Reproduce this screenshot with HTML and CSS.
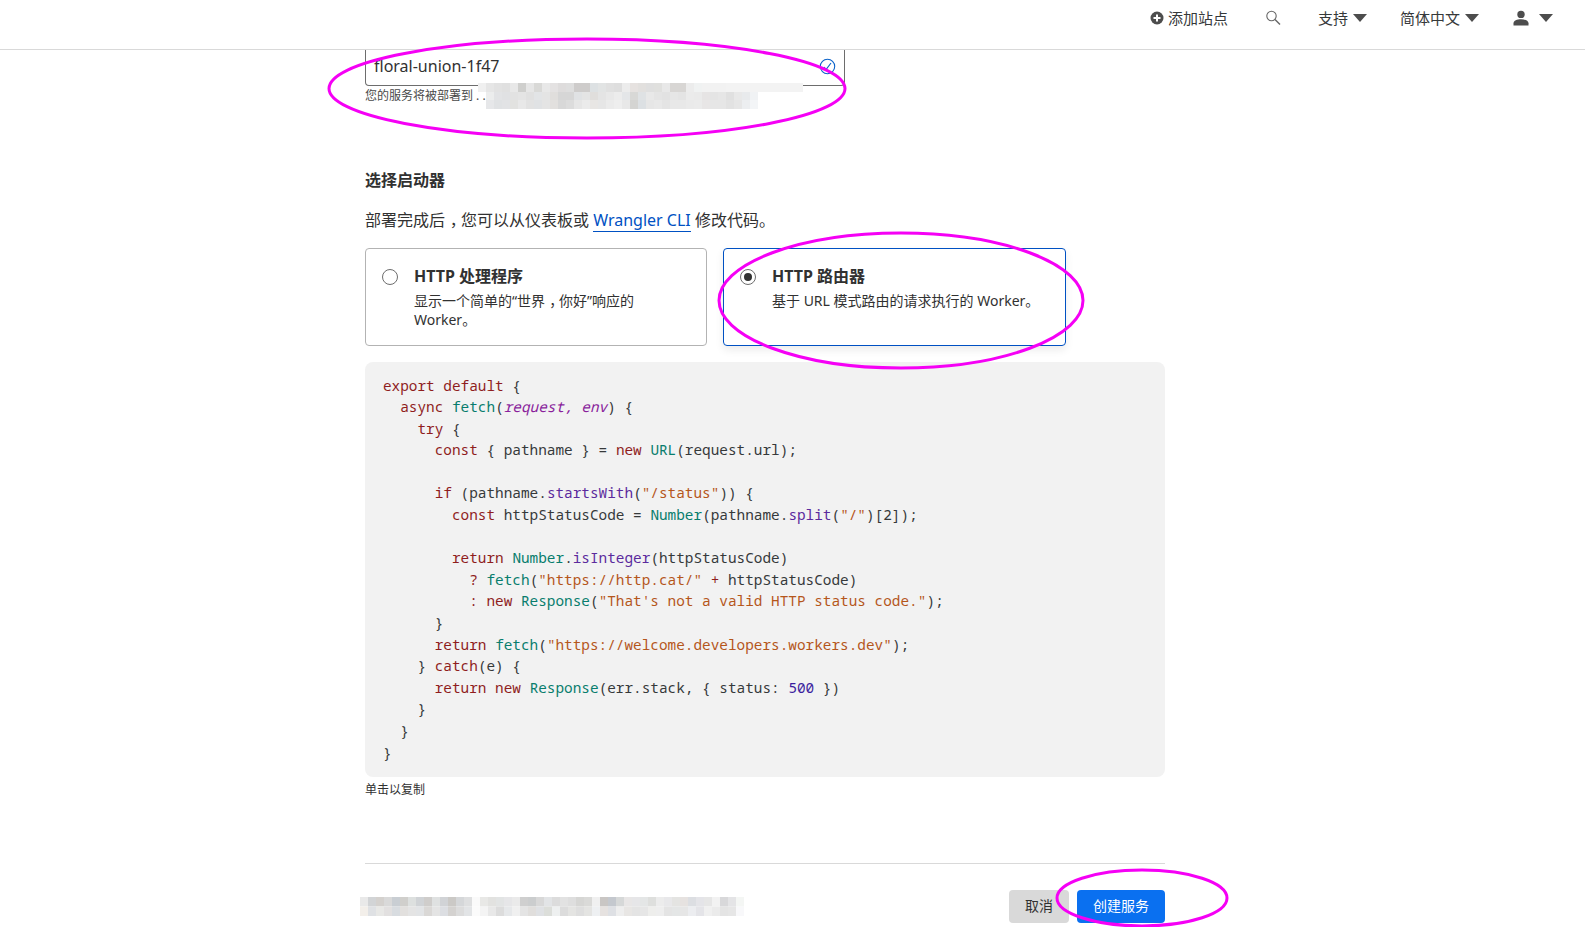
FILE: index.html
```html
<!DOCTYPE html>
<html lang="zh-CN">
<head>
<meta charset="utf-8">
<title>创建服务</title>
<link rel="stylesheet" href="styles.css">
</head>
<body>
<header class="topbar">
  <a class="nav-item add-site"><svg class="icon-plus" viewBox="0 0 14 14" width="14" height="14"><circle cx="7" cy="7" r="6.5" fill="#4d4d4d"/><path d="M3.5 7h7M7 3.5v7" stroke="#fff" stroke-width="2"/></svg>添加站点</a>
  <a class="nav-item search"><svg viewBox="0 0 16 16" width="16" height="16" fill="none" stroke="#666" stroke-width="1.1"><circle cx="6.5" cy="6" r="4.7"/><path d="M10 9.5l5 5" stroke-width="1.4"/></svg></a>
  <a class="nav-item support">支持<span class="caret"></span></a>
  <a class="nav-item lang">简体中文<span class="caret"></span></a>
  <a class="nav-item user"><svg viewBox="0 0 16 16" width="16" height="16" fill="#4d4d4d"><circle cx="8" cy="4.4" r="3.7"/><path d="M0.5 15.5v-2.2c0-2.6 3.6-4 7.5-4s7.5 1.4 7.5 4v2.2z"/></svg><span class="caret user-caret"></span></a>
</header>
<main class="page">
  <div class="name-input">
    <span class="name-value">floral-union-1f47</span>
    <svg class="check" viewBox="0 0 17 17" width="17" height="17" fill="none"><circle cx="8.5" cy="8.5" r="7.2" stroke="#0a62c9" stroke-width="1.1"/><path d="M5 9l2.2 2.4 4.8-6.4" stroke="#0a62c9" stroke-width="1.1"/></svg>
  </div>
  <p class="helper">您的服务将被部署到 . .</p>

  <h2 class="section-title">选择启动器</h2>
  <p class="intro">部署完成后<span class="comma">，</span>您可以从仪表板或 <a class="link">Wrangler CLI</a> 修改代码。</p>

  <div class="cards">
    <div class="card">
      <span class="radio"></span>
      <div class="card-body">
        <div class="card-title">HTTP 处理程序</div>
        <div class="card-desc">显示一个简单的“世界<span class="comma">，</span>你好”响应的 Worker。</div>
      </div>
    </div>
    <div class="card selected">
      <span class="radio checked"></span>
      <div class="card-body">
        <div class="card-title">HTTP 路由器</div>
        <div class="card-desc">基于 URL 模式路由的请求执行的 Worker。</div>
      </div>
    </div>
  </div>

  <pre class="code"><span class="k">export default</span> {
  <span class="k">async</span> <span class="f">fetch</span>(<span class="p">request, env</span>) {
    <span class="k">try</span> {
      <span class="k">const</span> { pathname } = <span class="k">new</span> <span class="f">URL</span>(request.url);

      <span class="k">if</span> (pathname.<span class="m">startsWith</span>(<span class="s">"/status"</span>)) {
        <span class="k">const</span> httpStatusCode = <span class="f">Number</span>(pathname.<span class="m">split</span>(<span class="s">"/"</span>)[2]);

        <span class="k">return</span> <span class="f">Number</span>.<span class="m">isInteger</span>(httpStatusCode)
          <span class="k">?</span> <span class="f">fetch</span>(<span class="s">"https://http.cat/"</span> <span class="k">+</span> httpStatusCode)
          <span class="k">:</span> <span class="k">new</span> <span class="f">Response</span>(<span class="s">"That's not a valid HTTP status code."</span>);
      }
      <span class="k">return</span> <span class="f">fetch</span>(<span class="s">"https://welcome.developers.workers.dev"</span>);
    } <span class="k">catch</span>(e) {
      <span class="k">return new</span> <span class="f">Response</span>(err.stack, { status: <span class="n">500</span> })
    }
  }
}</pre>
  <p class="copy-hint">单击以复制</p>

  <footer class="actions">
    <button class="btn cancel">取消</button>
    <button class="btn primary">创建服务</button>
  </footer>
</main>

<svg class="mosaic mosaic-top" width="325" height="26" viewBox="0 0 325 26" aria-hidden="true">
  <g>
    <rect x="0" fill="#f0f0f0"/><rect x="8" fill="#e6e6e6"/><rect x="16" fill="#e2e2e2"/><rect x="24" fill="#e0e0e0"/><rect x="32" fill="#e8e8e8"/><rect x="40" fill="#cfcfcd"/><rect x="48" fill="#e6e6e6"/><rect x="56" fill="#d9d9d7"/><rect x="64" fill="#e8e8e8"/><rect x="72" fill="#e4e2e2"/><rect x="80" fill="#dedcdc"/><rect x="88" fill="#dedede"/><rect x="96" fill="#cecccb"/><rect x="104" fill="#cecccb"/><rect x="112" fill="#dde1e3"/><rect x="120" fill="#e2e4e4"/><rect x="128" fill="#e0e0e0"/><rect x="136" fill="#dedede"/><rect x="144" fill="#ececec"/><rect x="152" fill="#e6e2e0"/><rect x="160" fill="#e2e0de"/><rect x="168" fill="#dfdfdf"/><rect x="176" fill="#e0e0de"/><rect x="184" fill="#e8e8e8"/><rect x="192" fill="#d8d6d4"/><rect x="200" fill="#d8d6d4"/><rect x="208" fill="#ececec"/><rect x="216" fill="#f0f2f2"/><rect x="224" fill="#f2f2f2"/><rect x="232" fill="#f2f2f2"/><rect x="240" fill="#f2f2f2"/><rect x="248" fill="#f3f3f3"/><rect x="256" fill="#f3f3f3"/><rect x="264" fill="#f3f3f3"/><rect x="272" fill="#f3f3f3"/><rect x="280" fill="#f3f3f3"/><rect x="288" fill="#f3f3f3"/><rect x="296" fill="#f3f3f3"/><rect x="304" fill="#f3f3f3"/><rect x="312" fill="#f3f3f3"/><rect x="320" fill="#f3f3f3"/>
  </g>
  <g class="row-2">
    <rect x="8" fill="#eceded"/><rect x="16" fill="#e2e3e5"/><rect x="24" fill="#e0e1e3"/><rect x="32" fill="#e2e2e2"/><rect x="40" fill="#e4e4e4"/><rect x="48" fill="#e0e0e0"/><rect x="56" fill="#e2e4e6"/><rect x="64" fill="#e4e4e4"/><rect x="72" fill="#e0dedc"/><rect x="80" fill="#d6d6d6"/><rect x="88" fill="#d6d6d6"/><rect x="96" fill="#e0e2e4"/><rect x="104" fill="#e4e4e4"/><rect x="112" fill="#e0dedc"/><rect x="120" fill="#e4e4e4"/><rect x="128" fill="#e8e8e8"/><rect x="136" fill="#ececec"/><rect x="144" fill="#e4e6e8"/><rect x="152" fill="#d8d8d6"/><rect x="160" fill="#dfe2e4"/><rect x="168" fill="#e8e8e8"/><rect x="176" fill="#e4e4e4"/><rect x="184" fill="#e2e2e2"/><rect x="192" fill="#e6e6e6"/><rect x="200" fill="#e4e4e4"/><rect x="208" fill="#ebebeb"/><rect x="216" fill="#eaeaea"/><rect x="224" fill="#e6e4e4"/><rect x="232" fill="#e4e4e4"/><rect x="240" fill="#e6e6e6"/><rect x="248" fill="#e0e0e0"/><rect x="256" fill="#e8e8e8"/><rect x="264" fill="#e8eaec"/><rect x="272" fill="#f0f2f4"/>
  </g>
  <g class="row-3">
    <rect x="8" fill="#e6e7e9"/><rect x="16" fill="#e0e2e4"/><rect x="24" fill="#e2e3e5"/><rect x="32" fill="#e2e2e0"/><rect x="40" fill="#e8e8e8"/><rect x="48" fill="#e2e2e2"/><rect x="56" fill="#e0e2e4"/><rect x="64" fill="#e4e4e4"/><rect x="72" fill="#e2e0de"/><rect x="80" fill="#d8d8d8"/><rect x="88" fill="#dcdcdc"/><rect x="96" fill="#e6e6e6"/><rect x="104" fill="#ebebeb"/><rect x="112" fill="#e8e6e4"/><rect x="120" fill="#e6e6e6"/><rect x="128" fill="#ebebeb"/><rect x="136" fill="#eeeeee"/><rect x="144" fill="#e8e8e8"/><rect x="152" fill="#d4d4d2"/><rect x="160" fill="#dce0e3"/><rect x="168" fill="#e6e6e6"/><rect x="176" fill="#e8e8e8"/><rect x="184" fill="#e4e4e4"/><rect x="192" fill="#e8e8e8"/><rect x="200" fill="#e8e8e8"/><rect x="208" fill="#eaeaea"/><rect x="216" fill="#ebebeb"/><rect x="224" fill="#e8e6e6"/><rect x="232" fill="#e6e6e6"/><rect x="240" fill="#e6e6e6"/><rect x="248" fill="#e2e2e2"/><rect x="256" fill="#e6e6e6"/><rect x="264" fill="#eceef0"/><rect x="272" fill="#f3f5f7"/>
  </g>
</svg>
<svg class="mosaic mosaic-bottom" width="392" height="19" viewBox="0 0 392 19" aria-hidden="true">
  <g class="tall">
    <rect x="0" fill="#e9e9e9"/><rect x="8" fill="#d2d4d6"/><rect x="16" fill="#d4d1ce"/><rect x="24" fill="#d9d9d9"/><rect x="32" fill="#c9ced3"/><rect x="40" fill="#d0cfcc"/><rect x="48" fill="#dde0df"/><rect x="56" fill="#d0d3d6"/><rect x="64" fill="#cfcdcb"/><rect x="72" fill="#dfe1e1"/><rect x="80" fill="#d1d3d6"/><rect x="88" fill="#cbc9c6"/><rect x="96" fill="#d5d7d9"/><rect x="104" fill="#dedfe0"/><rect x="112" fill="#fafafa"/><rect x="120" fill="#e8e8e6"/><rect x="128" fill="#e2e2e0"/><rect x="136" fill="#e2e4e4"/><rect x="144" fill="#e6e6e8"/><rect x="152" fill="#eaeaea"/><rect x="160" fill="#cfcfcf"/><rect x="168" fill="#cbcdce"/><rect x="176" fill="#d8d8d8"/><rect x="184" fill="#e2e4e6"/><rect x="192" fill="#dcdcdc"/><rect x="200" fill="#e2e2e2"/><rect x="208" fill="#dedede"/><rect x="216" fill="#d6d6d4"/><rect x="224" fill="#dadad8"/><rect x="232" fill="#f0f0f0"/><rect x="240" fill="#c9c6c4"/><rect x="248" fill="#c4c8ce"/><rect x="256" fill="#d6d8d8"/><rect x="264" fill="#e8e6e6"/><rect x="272" fill="#e6e6e8"/><rect x="280" fill="#e4e6e6"/><rect x="288" fill="#dedfdd"/><rect x="296" fill="#ececec"/><rect x="304" fill="#e8e8ea"/><rect x="312" fill="#e4e4e2"/><rect x="320" fill="#e6e2e0"/><rect x="328" fill="#dcdee2"/><rect x="336" fill="#e4e4e8"/><rect x="344" fill="#e6e6e6"/><rect x="352" fill="#f2f2f2"/><rect x="360" fill="#d8d8da"/><rect x="368" fill="#e4e4e6"/><rect x="376" fill="#f4f6f4"/>
  </g>
  <g class="tall row-low">
    <rect x="0" fill="#f3efea"/><rect x="8" fill="#dfe1e4"/><rect x="16" fill="#e8e8e6"/><rect x="24" fill="#e2e0e0"/><rect x="32" fill="#d8dce0"/><rect x="40" fill="#e2e0de"/><rect x="48" fill="#e4e4e4"/><rect x="56" fill="#e2e4e6"/><rect x="64" fill="#dad8d6"/><rect x="72" fill="#e4e4e4"/><rect x="80" fill="#dcdee2"/><rect x="88" fill="#d4d2d0"/><rect x="96" fill="#dcdcdc"/><rect x="104" fill="#e2e4e6"/><rect x="112" fill="#fbfbfb"/><rect x="120" fill="#f4f4f4"/><rect x="128" fill="#e8e8e8"/><rect x="136" fill="#dcdcdc"/><rect x="144" fill="#e6e8ea"/><rect x="152" fill="#f0f0f0"/><rect x="160" fill="#e4e4e4"/><rect x="168" fill="#e0dedc"/><rect x="176" fill="#dfe1e4"/><rect x="184" fill="#dcdeda"/><rect x="192" fill="#eef0f0"/><rect x="200" fill="#dcdcdc"/><rect x="208" fill="#e4e4e2"/><rect x="216" fill="#dedede"/><rect x="224" fill="#e4e4e2"/><rect x="232" fill="#eef0f2"/><rect x="240" fill="#e6e2e0"/><rect x="248" fill="#dee0e4"/><rect x="256" fill="#eeeeee"/><rect x="264" fill="#e8e6e4"/><rect x="272" fill="#e4e4e4"/><rect x="280" fill="#e6e6e6"/><rect x="288" fill="#eeeeec"/><rect x="296" fill="#eeeeee"/><rect x="304" fill="#e4e4e4"/><rect x="312" fill="#e4e6e6"/><rect x="320" fill="#e6e6e6"/><rect x="328" fill="#ecedf0"/><rect x="336" fill="#e4e4e8"/><rect x="344" fill="#f0f0f0"/><rect x="352" fill="#ebebeb"/><rect x="360" fill="#e4e4e4"/><rect x="368" fill="#e6e6e6"/><rect x="376" fill="#f8f8fa"/>
  </g>
</svg>

<svg class="annotation" width="1585" height="927" viewBox="0 0 1585 927" fill="none" stroke="#f500f5" stroke-width="3">
  <ellipse cx="587" cy="88.5" rx="258" ry="49.5"/>
  <ellipse cx="901" cy="300.5" rx="182" ry="67.5"/>
  <ellipse cx="1142" cy="898" rx="85" ry="28"/>
</svg>
</body>
</html>
```
FILE: styles.css
```css
* { box-sizing: border-box; }
html, body { margin: 0; height: 100%; overflow: hidden; background: #fff; }
body {
  position: relative;
  font-family: "Noto Sans", "Noto Sans CJK SC", sans-serif;
  color: #313131;
  font-size: 14px;
}

.topbar {
  height: 50px;
  border-bottom: 1px solid #d9d9d9;
  display: flex;
  align-items: center;
  justify-content: flex-end;
  padding: 0 32px 13px 0;
  color: #36393a;
}
.nav-item { display: flex; align-items: center; font-size: 15px; line-height: 20px; }
.add-site { margin-right: 37px; }
.icon-plus { margin-right: 4px; }
.search { margin-right: 37px; }
.support { margin-right: 33px; }
.lang { margin-right: 34px; }
.caret {
  width: 0; height: 0;
  margin-left: 5px;
  border-left: 7px solid transparent;
  border-right: 7px solid transparent;
  border-top: 8px solid #4d4d4d;
}
.user-caret { margin-left: 10px; }

.page { width: 800px; margin-left: 365px; }

.name-input {
  width: 480px;
  height: 36px;
  border: 1px solid #6d6d6d;
  border-top: none;
  border-radius: 0 0 4px 4px;
  display: flex;
  align-items: center;
  justify-content: space-between;
  padding: 0 8px 3px;
  font-size: 16px;
  line-height: 32px;
}
.helper { margin: 1px 0 0; font-size: 12px; line-height: 18px; color: #4a4a4a; }

.section-title { margin: 63px 0 0; font-size: 16px; line-height: 24px; font-weight: 700; color: #313131; }
.intro { margin: 16px 0 0; font-size: 16px; line-height: 24px; }
.comma { padding-left: .3em; margin-right: -.3em; }
.link { color: #0051c3; border-bottom: 1px solid #0051c3; }

.cards { display: flex; gap: 16px; margin-top: 16px; }
.card {
  width: 342px;
  height: 98px;
  border: 1px solid #b3b3b3;
  border-radius: 4px;
  display: flex;
  padding: 16px;
}
.card.selected { width: 343px; border-color: #0051c3; box-shadow: 0 4px 8px rgba(0, 0, 0, .08); }
.radio {
  width: 16px; height: 16px;
  margin-top: 4px;
  border: 1px solid #6d6d6d;
  border-radius: 50%;
  flex: none;
  display: flex;
  align-items: center;
  justify-content: center;
}
.radio.checked::after { content: ""; width: 8px; height: 8px; border-radius: 50%; background: #313131; }
.card-body { margin-left: 16px; }
.card-title { font-size: 16px; line-height: 22px; font-weight: 700; }
.card-desc { margin-top: 4px; font-size: 14px; line-height: 19px; width: 240px; }
.selected .card-desc { width: auto; }

.code {
  margin: 16px 0 0;
  height: 415px;
  padding: 12.5px 18px;
  background: #f2f2f2;
  border-radius: 8px;
  font-family: "Noto Sans Mono", "DejaVu Sans Mono", monospace;
  font-size: 14.38px;
  line-height: 21.6px;
  color: #36393a;
}
.k { color: #8f1d1d; }
.f { color: #087d6d; }
.s { color: #b5561b; }
.m { color: #5b2a9d; }
.n { color: #3b1d9e; }
.p { color: #8a1f9c; font-style: italic; }

.copy-hint { margin: 4px 0 0; font-size: 12px; line-height: 18px; }

.actions {
  margin-top: 64px;
  padding-top: 26px;
  border-top: 1px solid #d9d9d9;
  display: flex;
  justify-content: flex-end;
  gap: 8px;
}
.btn {
  height: 33px;
  border: none;
  border-radius: 4px;
  font: inherit;
  font-size: 14px;
  padding: 0 0 4px;
}
.cancel { width: 60px; background: #d9d9d9; color: #313131; }
.primary { width: 88px; background: #0a70f0; color: #fff; }

.mosaic { position: absolute; }
.mosaic rect { width: 8px; height: 9px; }
.row-2 { transform: translateY(9px); }
.row-3 { transform: translateY(17px); }
.mosaic .tall rect { height: 9.5px; }
.row-low { transform: translateY(9.5px); }
.mosaic-top { left: 478px; top: 83px; }
.mosaic-bottom { left: 360px; top: 897px; }
.annotation { position: absolute; left: 0; top: 0; pointer-events: none; }
```
